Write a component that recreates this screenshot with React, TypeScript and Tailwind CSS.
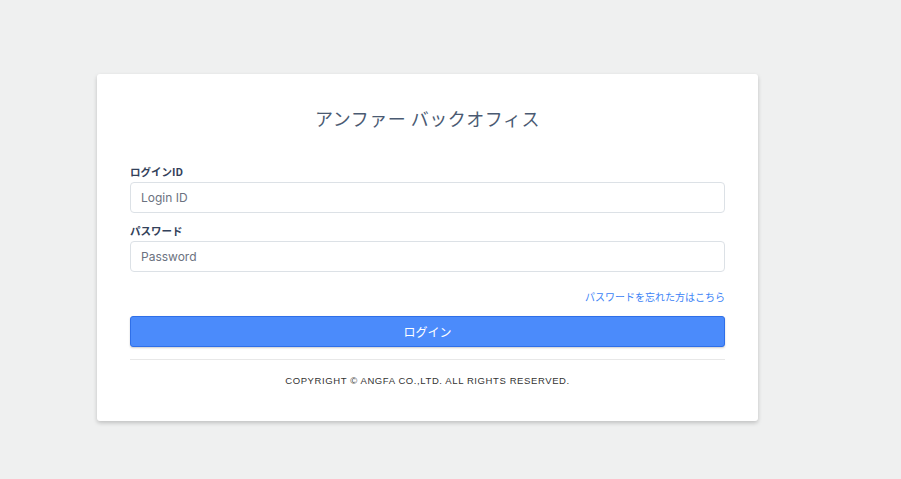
export default function App() {
  return (
    <div
      className="min-h-[479px] w-full bg-[#eff0f0] pt-[74px] pl-[97px]"
      style={{ fontFamily: '"Noto Sans CJK JP", "Noto Sans", sans-serif' }}
    >
      <div className="w-[661px] h-[347px] bg-white rounded-[3px] shadow-[0_2px_4px_rgba(0,0,0,0.2)] px-[33px] pt-[32px]">
        <h1 className="text-center text-[18px] leading-[24px] font-normal text-[#4a5a72] tracking-[0.5px]">
          アンファー バックオフィス
        </h1>

        <div className="mt-[35px]">
          <label className="block text-[10.5px] leading-[14px] font-bold text-[#33415a]">ログインID</label>
          <input
            className="mt-[3px] w-full h-[31px] rounded-[4px] border border-[#dce1e6] px-[10px] text-[12px] text-[#555] placeholder:text-[#6b7280] outline-none"
            style={{ fontFamily: 'Inter, "Noto Sans", sans-serif' }}
            placeholder="Login ID"
          />
        </div>

        <div className="mt-[11px]">
          <label className="block text-[10.5px] leading-[14px] font-bold text-[#33415a]">パスワード</label>
          <input
            type="password"
            className="mt-[3px] w-full h-[31px] rounded-[4px] border border-[#dce1e6] px-[10px] text-[12px] text-[#555] placeholder:text-[#6b7280] outline-none"
            style={{ fontFamily: 'Inter, "Noto Sans", sans-serif' }}
            placeholder="Password"
          />
        </div>

        <div className="mt-[18px] flex justify-end">
          <a className="text-[10px] leading-[14px] text-[#3b82f6]">パスワードを忘れた方はこちら</a>
        </div>

        <button className="mt-[12px] w-full h-[31px] rounded-[3px] bg-[#4b8bfb] border border-[#2f6fe8] text-white text-[12px] shadow-[0_1px_2px_rgba(0,0,0,0.2)]">
          ログイン
        </button>

        <div className="mt-[12px] border-t border-[#e8e8e8]" />

        <p
          className="mt-[14px] text-center text-[9.5px] leading-[14px] tracking-[0.6px] text-[#333]"
          style={{ fontFamily: '"Liberation Sans", Arial, sans-serif' }}
        >
          COPYRIGHT © ANGFA CO.,LTD. ALL RIGHTS RESERVED.
        </p>
      </div>
    </div>
  );
}
